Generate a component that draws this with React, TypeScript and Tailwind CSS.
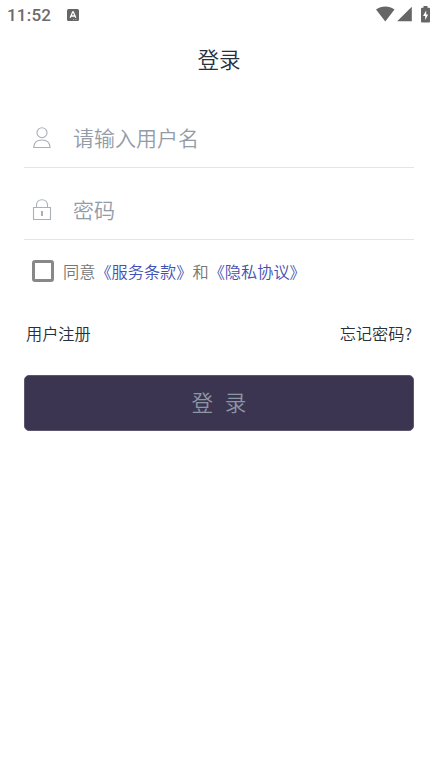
import type { ReactNode } from "react";

function StatusBar() {
  return (
    <div className="flex h-[30px] items-center justify-between pl-[7px] pr-[8px] text-[#6b6b6b]">
      <div className="flex items-center gap-[16px]">
        <span className="font-[Roboto] text-[17px] font-medium leading-[30px] tracking-[0.2px]">11:52</span>
        <svg width="12" height="12" viewBox="0 0 12 12" aria-hidden="true">
          <rect width="12" height="12" rx="1.5" fill="#666" />
          <path d="M3.2 8.8 5.700 2.800h.6l2.500 6M4.200 7h3.600" fill="none" stroke="#fff" strokeWidth="1.3" />
          <path d="M6 10.600h1.200M8.400 10.600h1.200" stroke="#bbb" strokeWidth=".8" />
        </svg>
      </div>
      <div className="flex items-center pb-[2px]">
        <svg width="19" height="16" viewBox="0 0 19 16" fill="#666" aria-hidden="true">
          <path d="M0 3.500C2.700 1.500 6 .5 9.300.5s6.600 1 9.200 3L9.300 15.500Z" />
        </svg>
        <svg className="ml-[2px]" width="15" height="16" viewBox="0 0 15 16" fill="#666" aria-hidden="true">
          <path d="M14.800 .8v14.500H.2Z" />
        </svg>
        <svg className="ml-[9px]" width="9" height="17" viewBox="0 0 9 17" aria-hidden="true">
          <path d="M2.500 0h4v1.700H8q1 0 1 1v12.800q0 1-1 1H1q-1 0-1-1V2.700q0-1 1-1h1.500Z" fill="#666" />
          <path d="M5.200 4.500 2 10h2.200v4l3-5.500h-2Z" fill="#fff" />
        </svg>
      </div>
    </div>
  );
}

function UserIcon() {
  return (
    <svg width="20" height="24" viewBox="0 0 20 24" fill="none" stroke="#a9b0b9" strokeWidth="1.1" aria-hidden="true">
      <circle cx="10" cy="6.700" r="5" />
      <path d="M1.700 21.500c.2-5 3.700-7.500 8.200-7.500s8 2.500 8.200 7.500Z" />
    </svg>
  );
}

function LockIcon() {
  return (
    <svg width="20" height="24" viewBox="0 0 20 24" fill="none" stroke="#a9b0b9" strokeWidth="1.1" aria-hidden="true">
      <path d="M1.500 9.500h17v12h-17ZM4.500 9.500V7.300c0-3.400 2.400-5.600 5.500-5.600s5.500 2.200 5.500 5.600v2.200" />
      <path d="M10 13v5" strokeWidth="2" />
    </svg>
  );
}

function Field({ icon, type, placeholder }: { icon: ReactNode; type: string; placeholder: string }) {
  return (
    <label className="flex h-[72px] items-center border-b border-[#e5e5e5] pb-[1px] pl-2 pt-[14px]">
      {icon}
      <input
        type={type}
        placeholder={placeholder}
        className="ml-[21px] h-10 min-w-0 flex-1 bg-transparent pb-[2px] text-[21px] font-[350] text-[#1f2a38] outline-none placeholder:text-[#929ca8]"
      />
    </label>
  );
}

export default function App() {
  return (
    <div lang="zh-CN" className="min-h-[780px] bg-white font-['Noto_Sans_CJK_SC',sans-serif] font-[350] text-[#26303d]">
      <StatusBar />
      <h1 className="pb-[2px] text-center text-[21.600px] font-[350] leading-[58px]">登录</h1>

      <main className="px-6 pt-[6px]">
        <Field icon={<UserIcon />} type="text" placeholder="请输入用户名" />
        <Field icon={<LockIcon />} type="password" placeholder="密码" />

        <div className="flex items-center pl-2 pt-[17px] text-[16.200px] leading-7 text-[#777]">
          <input
            type="checkbox"
            aria-label="同意"
            className="h-[22px] w-[22px] appearance-none rounded-[3px] border-[3px] border-[#888]"
          />
          <p className="ml-[9px] whitespace-nowrap">
            同意<a className="text-[#3f51b5]">《服务条款》</a>和<a className="text-[#3f51b5]">《隐私协议》</a>
          </p>
        </div>

        <div className="flex justify-between pl-[2px] pr-[2px] pt-[34px] text-[16.200px] leading-7">
          <a>用户注册</a>
          <a>忘记密码?</a>
        </div>

        <button
          type="button"
          className="mt-[28px] block h-[56px] w-full whitespace-pre rounded-[5px] border border-[#5b576f] bg-[#3b3552] pb-[2px] text-[21.600px] font-[350] text-[#8d96a3] [word-spacing:1px]"
        >
          登  录
        </button>
      </main>
    </div>
  );
}
